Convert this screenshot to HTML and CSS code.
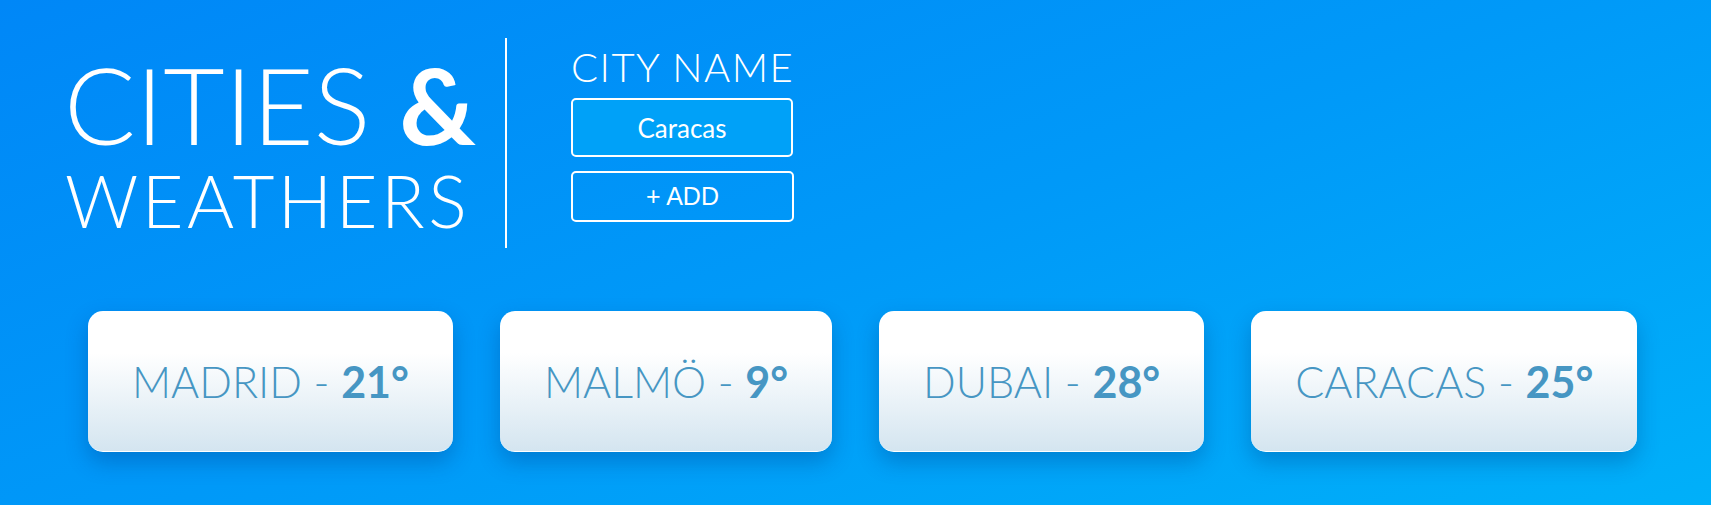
FILE: index.html
```html
<!DOCTYPE html>
<html lang="en">
<head>
<meta charset="utf-8">
<title>Cities &amp; Weathers</title>
<link rel="stylesheet" href="styles.css">
</head>
<body>
<main class="app">
  <header class="top">
    <div class="brand">
      <h1 class="brand-line1">CITIES <span class="amp">&amp;</span></h1>
      <div class="brand-line2">WEATHERS</div>
    </div>
    <form class="city-form">
      <label class="city-label" for="city">CITY NAME</label>
      <input class="city-input" id="city" type="text" value="Caracas">
      <button class="add-btn" type="button">+ ADD</button>
    </form>
  </header>
  <section class="cards">
    <div class="card"><span class="name">MADRID - </span><b class="temp">21°</b></div>
    <div class="card"><span class="name">MALMÖ - </span><b class="temp">9°</b></div>
    <div class="card"><span class="name">DUBAI - </span><b class="temp">28°</b></div>
    <div class="card"><span class="name">CARACAS - </span><b class="temp">25°</b></div>
  </section>
</main>
</body>
</html>
```

FILE: styles.css
```css
* { box-sizing: border-box; }
html, body { margin: 0; padding: 0; }
body {
  min-height: 505px;
  background: linear-gradient(160deg, #0087f7 0%, #0099f8 50%, #00b0f9 100%);
  font-family: "Lato", "Open Sans", sans-serif;
  color: #fff;
  overflow: hidden;
}
.app {
  display: flex;
  flex-direction: column;
}
.top {
  display: flex;
  padding: 38px 0 0 64px;
}
.brand {
  width: 443px;
  height: 210px;
  border-right: 2px solid #fff;
  display: flex;
  flex-direction: column;
}
.brand-line1 {
  margin: 11px 0 0;
  font-weight: 300;
  font-size: 106px;
  line-height: 111px;
  letter-spacing: 0;
  white-space: nowrap;
}
.amp { font-weight: 700; }
.brand-line2 {
  font-weight: 300;
  font-size: 72px;
  line-height: 80px;
  letter-spacing: 3.5px;
  padding-left: 1px;
  white-space: nowrap;
}
.city-form {
  margin-left: 64px;
  width: 222px;
  display: flex;
  flex-direction: column;
}
.city-label {
  font-size: 40px;
  font-weight: 300;
  line-height: 48px;
  margin-top: 5px;
  letter-spacing: 1.5px;
  white-space: nowrap;
}
.city-input {
  margin-top: 7px;
  height: 59px;
  width: 222px;
  border: 2px solid #fff;
  border-radius: 5px;
  background: #00a1f8;
  color: #fff;
  font-family: "Lato", sans-serif;
  font-size: 26px;
  text-align: center;
  outline: none;
}
.add-btn {
  margin-top: 14px;
  height: 51px;
  width: 223px;
  border: 2px solid #fff;
  border-radius: 5px;
  background: transparent;
  color: #fff;
  font-family: "Liberation Sans", Arial, sans-serif;
  font-size: 25px;
}
.cards {
  display: flex;
  gap: 47px;
  padding: 63px 0 0 88px;
}
.card {
  height: 141px;
  padding: 0 44px;
  display: flex;
  align-items: center;
  justify-content: center;
  white-space: pre;
  border-radius: 15px;
  border-bottom: 1px solid #fff;
  background: linear-gradient(to bottom, #ffffff 30%, #d4e5f0 100%);
  box-shadow: 0 10px 22px rgba(0, 40, 110, 0.28);
  color: #4696c3;
  font-size: 43px;
}
.name { font-weight: 300; }
.temp { font-weight: 700; }
```
